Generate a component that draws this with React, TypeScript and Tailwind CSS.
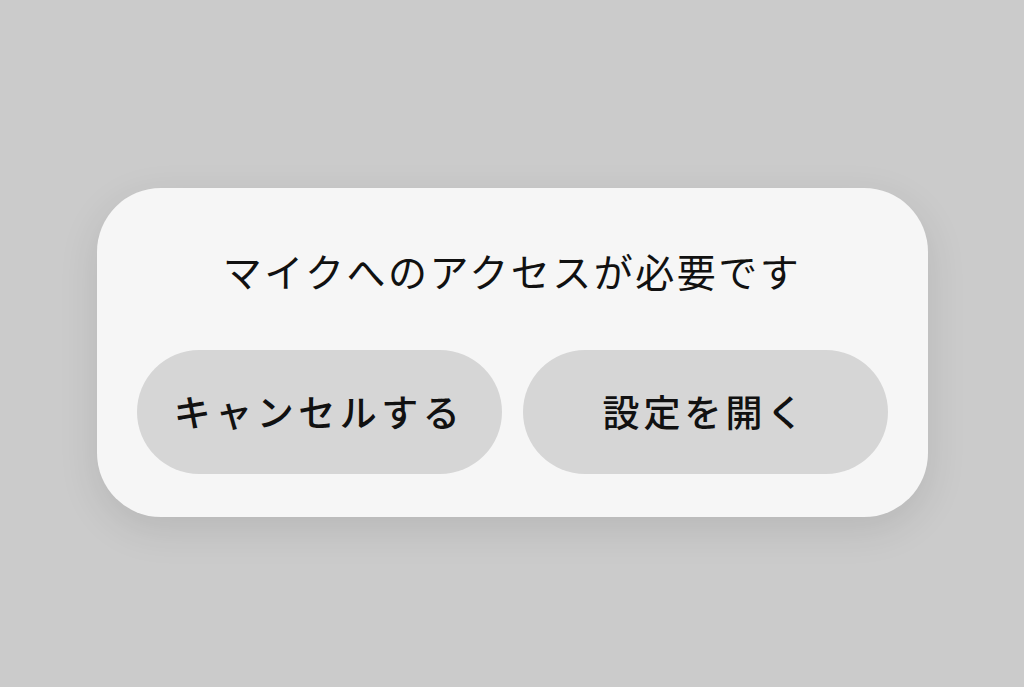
import React from 'react';

const font = { fontFamily: '"Noto Sans CJK JP", "Noto Sans", sans-serif' };

export default function App() {
  return (
    <div className="h-[687px] w-[1024px] bg-[#cbcbcb] pt-[188px]" style={font}>
      {/* Permission dialog */}
      <div className="mx-auto w-[831px] rounded-[64px] bg-[#f6f6f6] px-[40px] pt-[60px] pb-[43px] shadow-[0_12px_40px_rgba(0,0,0,0.10)]">
        <p className="text-center text-[39px] leading-[44px] tracking-[2.5px] text-[#111]">
          マイクへのアクセスが必要です
        </p>
        <div className="mt-[58px] flex gap-[21px]">
          <button className="flex h-[124px] flex-1 items-center justify-center rounded-full bg-[#d6d6d6] text-[37px] font-medium tracking-[4.5px] text-[#111]">
            キャンセルする
          </button>
          <button className="flex h-[124px] flex-1 items-center justify-center rounded-full bg-[#d6d6d6] text-[37px] font-medium tracking-[4px] text-[#111]">
            設定を開く
          </button>
        </div>
      </div>
    </div>
  );
}
